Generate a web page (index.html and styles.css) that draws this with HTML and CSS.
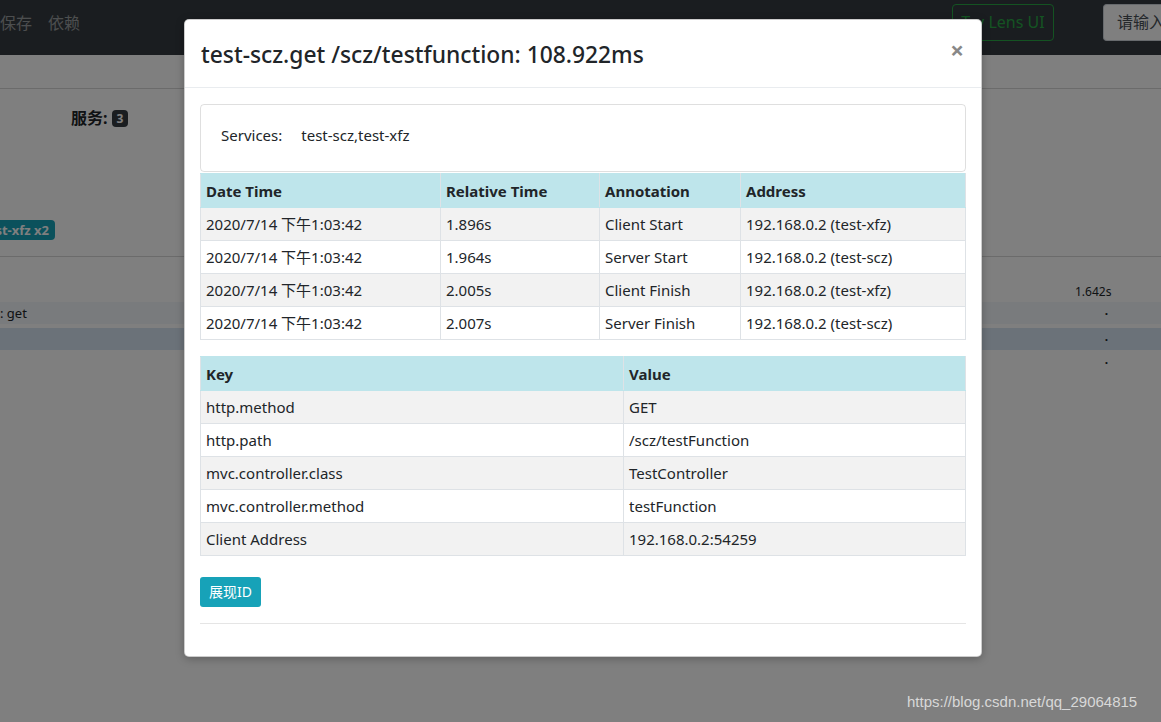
FILE: index.html
```html
<!DOCTYPE html>
<html lang="zh">
<head>
<meta charset="utf-8">
<title>Trace</title>
<link rel="stylesheet" href="styles.css">
</head>
<body>
<div class="page">
  <nav class="navbar">
    <div class="nav-links">
      <span class="nav-link">保存</span>
      <span class="nav-link">依赖</span>
    </div>
    <div class="nav-right">
      <span class="btn-outline">Try Lens UI</span>
      <span class="search">请输入</span>
    </div>
  </nav>
  <div class="subbar"></div>
  <div class="summary">
    <div class="services"><span class="services-label">服务:</span><span class="badge-dark">3</span></div>
    <div class="badge-row"><span class="badge-info">test-xfz x2</span></div>
  </div>
  <div class="timeline">
    <div class="tl-head"><span class="tl-time">1.642s</span></div>
    <div class="tl-row tl-a"><span class="tl-name">: get</span><span class="tl-dot">·</span></div>
    <div class="tl-row tl-b"><span class="tl-name"></span><span class="tl-dot">·</span></div>
    <div class="tl-row"><span class="tl-name"></span><span class="tl-dot">·</span></div>
  </div>
</div>

<div class="backdrop"></div>

<div class="modal">
  <div class="modal-header">
    <h4 class="modal-title">test-scz.get /scz/testfunction: 108.922ms</h4>
    <span class="close">×</span>
  </div>
  <div class="modal-body">
    <div class="card">
      <span class="card-label">Services:</span><span class="card-value">test-scz,test-xfz</span>
    </div>
    <table class="table t1">
      <colgroup><col style="width:240px"><col style="width:159px"><col style="width:141px"><col></colgroup>
      <thead><tr><th>Date Time</th><th>Relative Time</th><th>Annotation</th><th>Address</th></tr></thead>
      <tbody>
        <tr><td>2020/7/14 下午1:03:42</td><td>1.896s</td><td>Client Start</td><td>192.168.0.2 (test-xfz)</td></tr>
        <tr><td>2020/7/14 下午1:03:42</td><td>1.964s</td><td>Server Start</td><td>192.168.0.2 (test-scz)</td></tr>
        <tr><td>2020/7/14 下午1:03:42</td><td>2.005s</td><td>Client Finish</td><td>192.168.0.2 (test-xfz)</td></tr>
        <tr><td>2020/7/14 下午1:03:42</td><td>2.007s</td><td>Server Finish</td><td>192.168.0.2 (test-scz)</td></tr>
      </tbody>
    </table>
    <table class="table t2">
      <colgroup><col style="width:423px"><col></colgroup>
      <thead><tr><th>Key</th><th>Value</th></tr></thead>
      <tbody>
        <tr><td>http.method</td><td>GET</td></tr>
        <tr><td>http.path</td><td>/scz/testFunction</td></tr>
        <tr><td>mvc.controller.class</td><td>TestController</td></tr>
        <tr><td>mvc.controller.method</td><td>testFunction</td></tr>
        <tr><td>Client Address</td><td>192.168.0.2:54259</td></tr>
      </tbody>
    </table>
    <div class="actions"><span class="btn-info">展现ID</span></div>
    <hr class="rule">
  </div>
</div>

<div class="watermark">https://blog.csdn.net/qq_29064815</div>
</body>
</html>
```

FILE: styles.css
```css
* { box-sizing: border-box; }
html, body { margin: 0; padding: 0; }
body {
  width: 1161px;
  height: 722px;
  overflow: hidden;
  background: #fff;
  font-family: "Noto Sans", "Noto Sans CJK SC", sans-serif;
  font-size: 15px;
  color: #212529;
  position: relative;
}

/* background page */
.navbar {
  height: 55px;
  background: #343a40;
  display: flex;
  justify-content: space-between;
  align-items: flex-start;
  padding-top: 4px;
}
.nav-links { display: flex; gap: 16px; padding-top: 7px; }
.nav-link { color: rgba(255,255,255,.5); font-size: 16px; line-height: 24px; }
.nav-right { display: flex; gap: 49px; margin-right: -12px; }
.btn-outline {
  width: 102px; height: 37px;
  border: 1px solid #28a745;
  border-radius: 4px;
  color: #28a745;
  font-size: 16px;
  line-height: 35px;
  text-align: center;
}
.search {
  width: 70px; height: 37px;
  border: 1px solid #ced4da;
  border-right: none;
  border-radius: 4px 0 0 4px;
  background: #fff;
  color: #495057;
  font-size: 16px;
  line-height: 35px;
  padding-left: 13px;
  overflow: hidden;
  white-space: nowrap;
}
.subbar { height: 34px; border-bottom: 1px solid #d6d6d6; }
.summary { height: 168px; border-bottom: 1px solid #d6d6d6; position: relative; }
.services { padding: 17px 0 0 71px; display: flex; align-items: center; gap: 4px; }
.services-label { font-weight: bold; font-size: 16px; line-height: 24px; }
.badge-dark {
  background: #343a40; color: #fff; font-size: 12px; font-weight: bold;
  padding: 1px 5px; border-radius: 4px; line-height: 15px;
}
.badge-row { padding-top: 89px; margin-left: -24px; }
.badge-info {
  background: #17a2b8; color: #fff; font-size: 13px; font-weight: bold;
  padding: 1px 6px; border-radius: 4px; line-height: 14px;
}
.timeline { font-size: 12px; }
.tl-head { height: 45px; position: relative; }
.tl-time { position: absolute; left: 1075px; top: 26px; color: #212529; }
.tl-row { height: 25px; display: flex; justify-content: space-between; align-items: center; padding-right: 53px; }
.tl-a { background: #f2f6fa; height: 22px; margin-bottom: 4px; }
.tl-b { background: #d7e5f3; height: 22px; }
.tl-name { margin-left: 0; font-size: 13px; }
.tl-dot { font-weight: bold; }

.backdrop { position: absolute; inset: 0; background: rgba(0,0,0,.5); }

/* modal */
.modal {
  position: absolute;
  left: 184px; top: 19px;
  width: 798px;
  background: #fff;
  border: 1px solid rgba(0,0,0,.2);
  border-radius: 5px;
  box-shadow: 0 2px 8px rgba(0,0,0,.25);
}
.modal-header {
  display: flex; justify-content: space-between; align-items: center;
  padding: 17px 16px 14px 16px;
  border-bottom: 1px solid #e9ecef;
}
.modal-title { margin: 0; font-size: 22.8px; font-weight: 500; line-height: 36px; color: #212529; }
.close { font-size: 24px; font-weight: bold; color: #888; line-height: 24px; margin-right: 1px; margin-top: -11px; }
.modal-body { padding: 16px 15px 16px 15px; }
.card {
  border: 1px solid rgba(0,0,0,.125);
  border-radius: 4px;
  padding: 18px 20px 24px 20px;
  line-height: 24px;
}
.card-label { margin-right: 19px; }
.table { width: 100%; border-collapse: collapse; table-layout: fixed; margin-bottom: 16px; margin-top: 0; }
.t1 { margin-top: 1px; }
.table th, .table td {
  border: 1px solid #dee2e6;
  padding: 4px 5px;
  line-height: 24px;
  text-align: left;
  white-space: nowrap;
  overflow: hidden;
}
.table th { background: #bee5eb; border-color: #bee5eb #dee2e6; font-weight: bold; padding: 5px 5px 4px 5px; }
.table tbody tr:nth-child(odd) td { background: #f2f2f2; }
.actions { margin-top: 21px; display: flex; }
.btn-info {
  display: block;
  background: #17a2b8; color: #fff;
  font-size: 14px; line-height: 20px;
  padding: 5px 9px; border-radius: 3px;
}
.rule { border: 0; border-top: 1px solid #e5e5e5; margin: 16px 0 16px 0; }

.watermark {
  position: absolute; left: 907px; top: 693px;
  font-family: "Liberation Sans", Arial, sans-serif;
  font-size: 15px; color: #d8d8d8;
}
```
